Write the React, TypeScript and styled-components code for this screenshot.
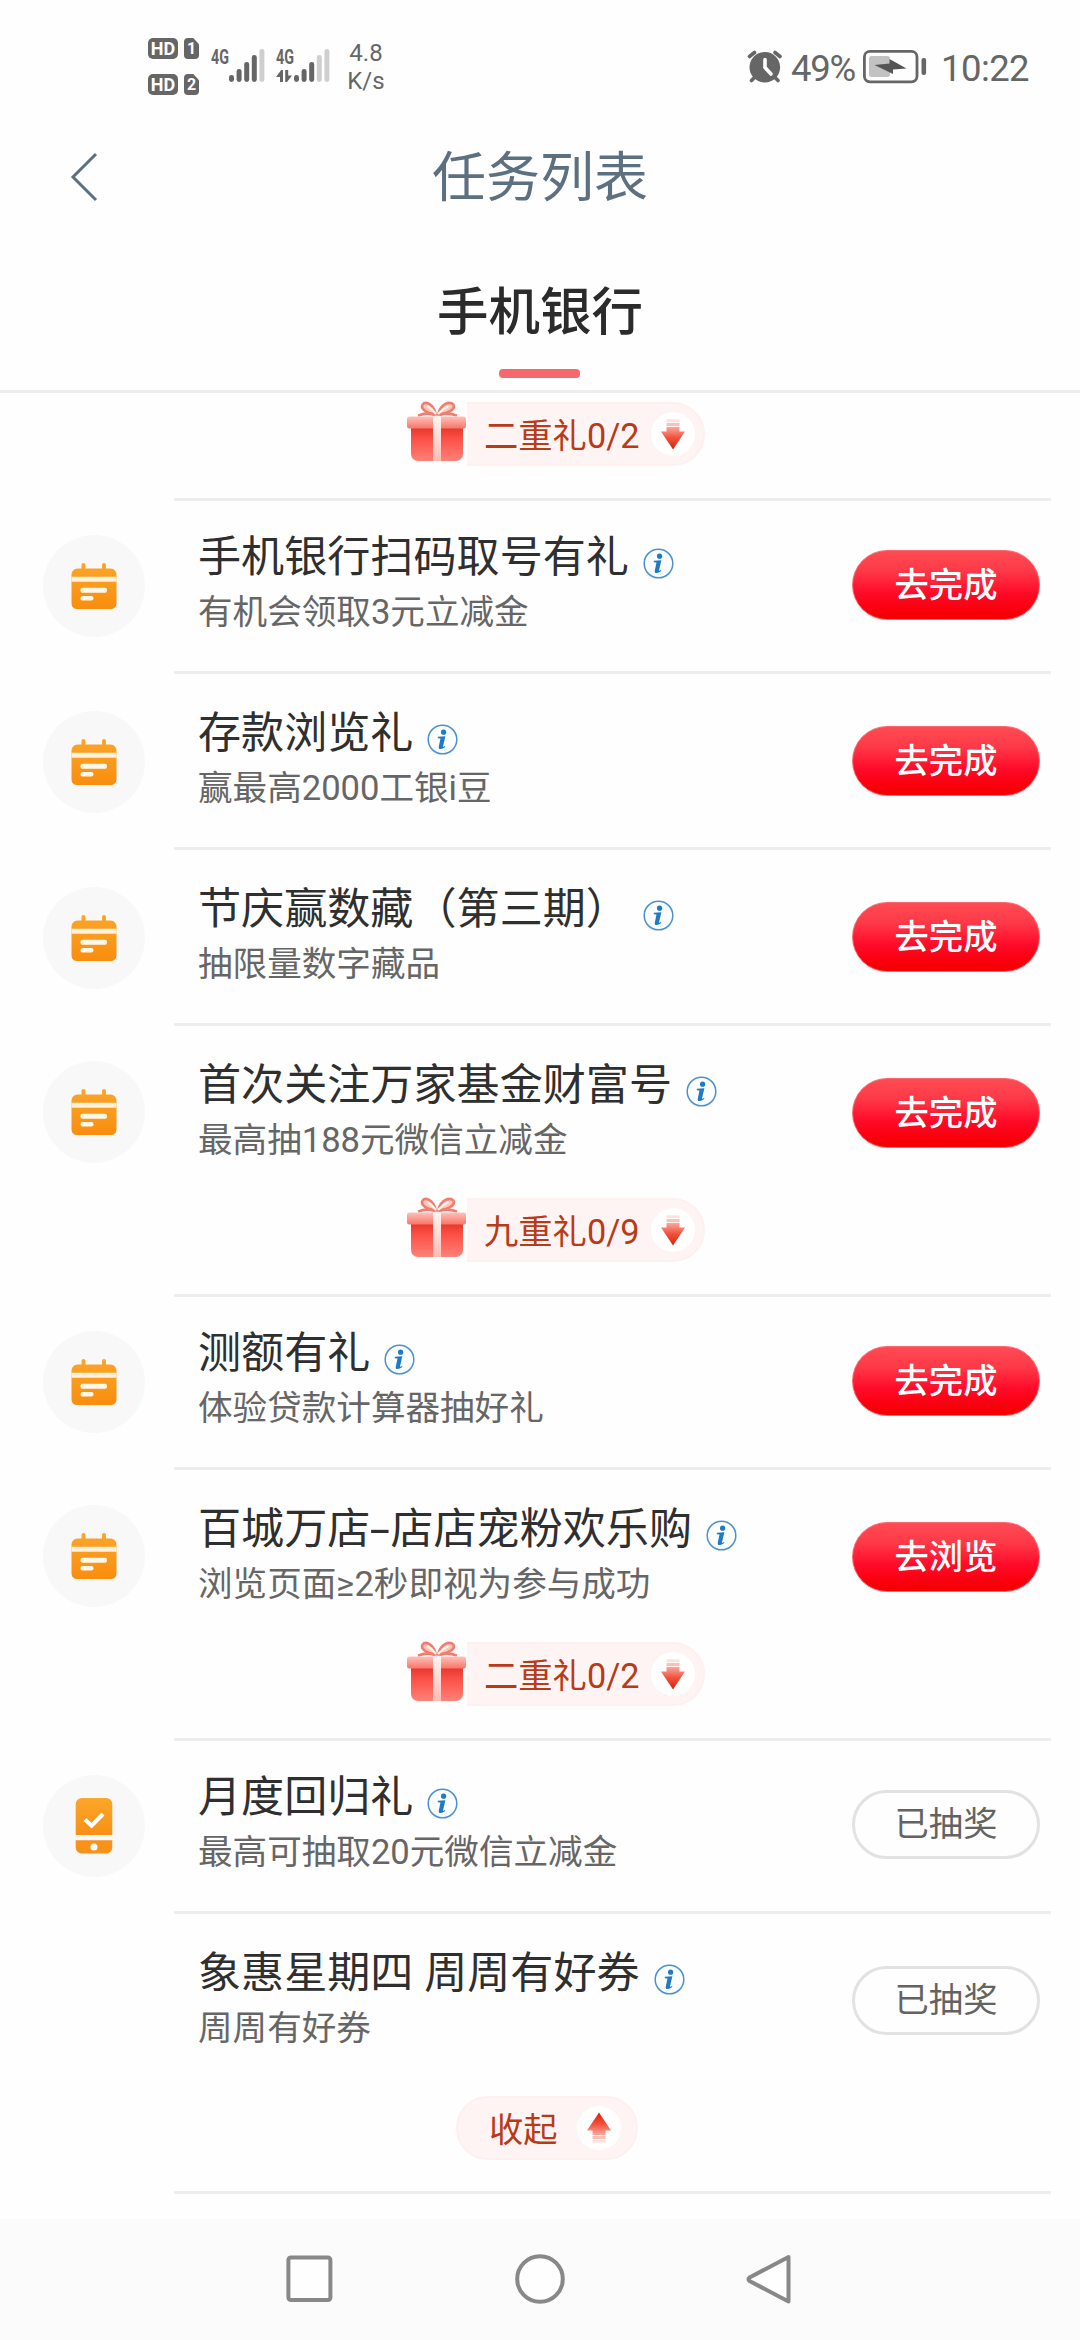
import React from "react";
import styled, { createGlobalStyle } from "styled-components";

const GlobalStyle = createGlobalStyle`
  * { box-sizing: border-box; }
  body {
    margin: 0;
    background: #fefefe;
    font-family: Roboto, "Noto Sans CJK SC", sans-serif;
  }
`;

const Screen = styled.div`
  display: flex;
  flex-direction: column;
  width: 1080px;
  height: 2340px;
  overflow: hidden;
  background: #fefefe;
`;

const StatusBar = styled.div`
  display: flex;
  justify-content: space-between;
  height: 116px;
  padding: 0 51px 0 148px;
  color: #666;
`;

const StatusLeft = styled.div`
  display: flex;
  align-items: flex-start;
  padding-top: 38px;
`;

const StatusRight = styled.div`
  display: flex;
  align-items: flex-start;
  padding-top: 48px;
`;

const SimStack = styled.div`
  display: flex;
  flex-direction: column;
  gap: 15px;
`;

const SimRow = styled.div`
  display: flex;
  gap: 6px;
`;

const HdTag = styled.span`
  width: 30px;
  height: 21px;
  border-radius: 5px;
  background: #666;
  color: #fff;
  font-size: 18px;
  font-weight: 700;
  line-height: 21px;
  text-align: center;
`;

const SimTag = styled.span`
  width: 15px;
  height: 21px;
  background: #666;
  color: #fff;
  border-radius: 4px;
  clip-path: polygon(0 0, 62% 0, 100% 30%, 100% 100%, 0 100%);
  font-size: 16px;
  font-weight: 700;
  line-height: 22px;
  text-align: center;
`;

const Signal = styled.svg<{ $left: number }>`
  display: block;
  margin: 8px 0 0 ${(p) => p.$left}px;
`;

const Speed = styled.div`
  width: 40px;
  margin: 1px 0 0 14px;
  font-size: 24px;
  line-height: 28px;
  text-align: center;
`;

const StatusText = styled.span<{ $left: number; $spacing: number }>`
  margin-left: ${(p) => p.$left}px;
  font-size: 36.5px;
  line-height: 42px;
  letter-spacing: ${(p) => p.$spacing}px;
  white-space: nowrap;
`;

const StatusIcon = styled.svg<{ $left?: number }>`
  display: block;
  margin-left: ${(p) => p.$left ?? 0}px;
`;

const Header = styled.header`
  display: grid;
  grid-template-columns: 160px 1fr 160px;
  align-items: center;
  height: 122px;
`;

const BackButton = styled.button`
  display: flex;
  align-items: center;
  height: 100%;
  padding: 0 0 0 69px;
  border: 0;
  background: none;
`;

const PageTitle = styled.h1`
  margin: 4px 0 0;
  color: #5d7080;
  font-size: 54px;
  font-weight: 400;
  line-height: 70px;
  text-align: center;
`;

const Tabs = styled.nav`
  display: flex;
  justify-content: center;
  height: 155px;
  border-bottom: 3px solid #ededed;
`;

const Tab = styled.div`
  display: flex;
  flex-direction: column;
  align-items: center;
  padding-top: 43px;
  color: #2b2b2b;
  font-size: 51.5px;
  font-weight: 500;
  line-height: 64px;

  &::after {
    content: "";
    width: 81px;
    height: 9px;
    margin-top: 24px;
    border-radius: 4px;
    background: #f6686e;
  }
`;

const List = styled.main`
  flex: 1;
  min-height: 0;
  overflow: hidden;
`;

const Row = styled.section<{ $height: number }>`
  display: flex;
  height: ${(p) => p.$height}px;
`;

const IconCell = styled.div<{ $top: number }>`
  width: 174px;
  padding: ${(p) => p.$top}px 0 0 43px;
`;

const IconDisc = styled.div`
  display: flex;
  align-items: center;
  justify-content: center;
  width: 102px;
  height: 102px;
  border-radius: 50%;
  background: #f8f8f8;
`;

const RowBody = styled.div<{ $first: boolean }>`
  display: flex;
  flex: 1;
  align-items: flex-start;
  justify-content: space-between;
  margin-right: 29px;
  padding: ${(p) => (p.$first ? 29 : 32)}px 11px 0 24px;
  border-top: 3px solid #ededed;
`;

const RowTitle = styled.h2`
  display: flex;
  align-items: center;
  margin: 0;
  color: #2f2f2f;
  font-size: 43.1px;
  font-weight: 400;
  line-height: 56px;
  white-space: pre;
`;

const Hyphen = styled.span`
  display: inline-block;
  width: 20px;
  text-align: center;
  transform: scaleX(1.7);
`;

const RowNote = styled.p`
  margin: 3px 0 0;
  color: #666;
  font-size: 34.6px;
  line-height: 46px;
  white-space: nowrap;
`;

const Info = styled.svg`
  display: block;
  margin: 10px 0 0 14px;
`;

const Action = styled.button<{ $done: boolean }>`
  width: 188px;
  height: ${(p) => (p.$done ? 69 : 70)}px;
  margin-top: 20px;
  padding: 0;
  border: ${(p) => (p.$done ? "3px solid #e2e2e2" : "1px solid #ff6a72")};
  border-radius: 35px;
  background: ${(p) =>
    p.$done
      ? "#fefefe"
      : "linear-gradient(180deg, #fd4c55 0%, #fe3947 30%, #ff0a28 62%, #fb0010 82%, #f10000 100%) border-box"};
  color: ${(p) => (p.$done ? "#636363" : "#fff")};
  font-family: inherit;
  font-size: 34.3px;
  font-weight: ${(p) => (p.$done ? 400 : 500)};
  line-height: ${(p) => (p.$done ? 63 : 66)}px;
`;

const RewardBar = styled.div<{ $height: number; $left: number }>`
  display: flex;
  align-items: flex-start;
  height: ${(p) => p.$height}px;
  padding-left: ${(p) => p.$left}px;
`;

const Gift = styled.svg`
  display: block;
  margin-top: -1px;
`;

const RewardPill = styled.div<{ $round: boolean }>`
  display: flex;
  align-items: center;
  justify-content: space-between;
  width: ${(p) => (p.$round ? 182 : 238)}px;
  height: 64px;
  padding: 0 ${(p) => (p.$round ? "15px 0 31px" : "8px 0 17px")};
  border: 2px solid #fff0f0;
  border-left-width: ${(p) => (p.$round ? 2 : 0)}px;
  border-radius: ${(p) => (p.$round ? "32px" : "0 32px 32px 0")};
  background: #fff4f4;
  color: #b93a16;
  font-size: 34.3px;
  line-height: 56px;
  white-space: nowrap;
`;

const RewardLabel = styled.span`
  padding-top: 3px;
`;

const ArrowDisc = styled.span`
  display: flex;
  align-items: center;
  justify-content: center;
  width: 44px;
  height: 44px;
  border-radius: 50%;
  background: #fff;
`;

const NavBar = styled.footer`
  display: flex;
  align-items: flex-start;
  height: 121px;
  padding: 34px 0 0 284px;
  gap: 178px;
  background: #fbfbfb;
`;

const NavIcon = styled.svg`
  display: block;
`;

function SignalIcon({ active, transfer, left }: { active: number; transfer?: boolean; left: number }) {
  const tops = [29, 23, 16, 9, 3];
  return (
    <Signal $left={left} width={56} height={38} viewBox="0 0 56 38">
      <text x="0" y="18" fontSize="20" fontWeight="700" fill="#666" textLength="18" lengthAdjust="spacingAndGlyphs">
        4G
      </text>
      {tops.map((top, i) => (
        <rect key={top} x={18 + i * 7.6} y={top} width="5" height={36 - top} rx="2.4" fill={i < active ? "#666" : "#cfcfcf"} />
      ))}
      {transfer && (
        <path d="M0 31 L5.2 24 H7 V36 H4 V31Z M9.2 24 H12.2 V29.5 H16 L11 36 H9.2Z" fill="#666" />
      )}
    </Signal>
  );
}

function AlarmIcon() {
  return (
    <StatusIcon width={38} height={40} viewBox="0 0 38 40">
      <g fill="none" stroke="#666" strokeWidth="3.6" strokeLinecap="round">
        <path d="M3.5 8.5 L8.5 4.5 M34 8.5 L29 4.5" />
        <path d="M8 30 L5.5 32.5 M29.5 30 L32 32.5" />
      </g>
      <circle cx="18.8" cy="19.2" r="15.3" fill="#666" />
      <path d="M19 11.5 V19.5 L25 26" fill="none" stroke="#fff" strokeWidth="3.6" strokeLinecap="round" />
    </StatusIcon>
  );
}

function BatteryIcon() {
  return (
    <StatusIcon $left={8} width={64} height={40} viewBox="0 0 64 40">
      <rect x="1.4" y="3.4" width="52.6" height="30.4" rx="5.5" fill="none" stroke="#666" strokeWidth="2.8" />
      <rect x="6" y="8" width="21" height="21" rx="2.5" fill="#c2c2c2" />
      <path d="M11.5 17 L26.5 15.5 V11 L43.5 20.5 L30 21.5 V26Z" fill="#555" />
      <rect x="58.5" y="10" width="4.6" height="17" rx="2" fill="#666" />
    </StatusIcon>
  );
}

function CalendarIcon() {
  return (
    <svg width="46" height="62" viewBox="0 0 46 62">
      <defs>
        <linearGradient id="calendarFill" x1="0" y1="0" x2="0" y2="1">
          <stop offset="0" stopColor="#fba62a" />
          <stop offset="1" stopColor="#f98d0e" />
        </linearGradient>
      </defs>
      <path d="M10.5 10 a2 2 0 0 1 4 0 V13.4 H31 V10 a2 2 0 0 1 4 0 V13.4 H39.5 a6 6 0 0 1 6 6 V48.5 a5.5 5.5 0 0 1 -5.5 5.5 H6 A5.5 5.5 0 0 1 .5 48.5 V19.4 a6 6 0 0 1 6 -6 H10.5Z" fill="url(#calendarFill)" />
      <path d="M.5 21.8 H45.5 V26.8 H.5Z" fill="#fff1dc" />
      <rect x="9.5" y="32.8" width="26.5" height="5" rx="2" fill="#fff7ea" />
      <rect x="9.5" y="41" width="13" height="4.6" rx="2" fill="#fff7ea" />
    </svg>
  );
}

function PhoneIcon() {
  return (
    <svg width="38" height="58" viewBox="0 0 38 58">
      <defs>
        <linearGradient id="phoneFill" x1="0" y1="0" x2="0" y2="1">
          <stop offset="0" stopColor="#fba72a" />
          <stop offset="1" stopColor="#f98f16" />
        </linearGradient>
      </defs>
      <path d="M.7 38 V7 a6 6 0 0 1 6 -6 H31.3 a6 6 0 0 1 6 6 V38Z" fill="url(#phoneFill)" />
      <path d="M.7 43.2 H37.3 V50.5 a6 6 0 0 1 -6 6 H6.7 a6 6 0 0 1 -6 -6Z" fill="#f9921b" />
      <path d="M10 22.5 L16.6 28.6 L28 17" fill="none" stroke="#fff" strokeWidth="4" />
      <circle cx="19" cy="50" r="3.5" fill="#fff" />
    </svg>
  );
}

function InfoIcon() {
  return (
    <Info width="31" height="31" viewBox="0 0 31 31">
      <circle cx="15.5" cy="15.5" r="14.3" fill="#fdfeff" stroke="#4b92cf" strokeWidth="1.5" />
      <circle cx="16.6" cy="8.2" r="2.6" fill="#2079c4" />
      <path d="M10.8 12.8 L18.4 12.2 L16 22.2 Q15.8 23.4 18.4 21.8 L18 23.2 Q11 27.4 11.8 22.4 L13.5 14.4 L10.8 14.2Z" fill="#2079c4" />
    </Info>
  );
}

function GiftIcon() {
  return (
    <Gift width="60" height="64" viewBox="0 0 60 64">
      <defs>
        <linearGradient id="giftBox" x1="0" y1="0" x2="0" y2="1">
          <stop offset="0" stopColor="#e5352b" />
          <stop offset=".35" stopColor="#fb5147" />
          <stop offset="1" stopColor="#fd8178" />
        </linearGradient>
        <linearGradient id="giftLid" x1="0" y1="0" x2="0" y2="1">
          <stop offset="0" stopColor="#fdc2ba" />
          <stop offset="1" stopColor="#fb7468" />
        </linearGradient>
        <linearGradient id="giftRibbon" x1="0" y1="0" x2="0" y2="1">
          <stop offset="0" stopColor="#fff4f1" />
          <stop offset="1" stopColor="#fdbdb4" />
        </linearGradient>
      </defs>
      <g fill="#fcc9b9" stroke="#f37c70" strokeWidth="2.6" strokeLinejoin="round">
        <path d="M29 13.5 C26 2 18 0 15.6 3.6 C13 8 20 12.5 29 13.5Z" />
        <path d="M31 13.5 C34 2 43 0 46.4 3.6 C49 8 41 12.5 31 13.5Z" />
        <path d="M28 14 Q20 11 11 14.6 M32 14 Q41 11 50 14.6" fill="none" />
      </g>
      <path d="M20.5 5 Q25 7.5 29 13 M41.5 5 Q36 7.5 31 13" fill="none" stroke="#fff3ee" strokeWidth="2.2" />
      <path d="M4 26 H56 V53 a7 7 0 0 1 -7 7 H11 a7 7 0 0 1 -7 -7Z" fill="url(#giftBox)" />
      <rect x="0" y="15.5" width="59" height="12" rx="2.5" fill="url(#giftLid)" />
      <rect x="26" y="15.5" width="8" height="44.5" fill="url(#giftRibbon)" />
    </Gift>
  );
}

function ArrowIcon({ up }: { up?: boolean }) {
  return (
    <svg width="24" height="32" viewBox="0 0 24 32">
      <defs>
        <linearGradient id="arrowFill" x1="0" y1="0" x2="0" y2="1">
          <stop offset="0" stopColor="#fba79b" />
          <stop offset=".5" stopColor="#f04f3a" />
          <stop offset="1" stopColor="#dc2008" />
        </linearGradient>
      </defs>
      <g transform={up ? "rotate(180 12 16)" : undefined}>
        <path d="M5.5 9 H18.5 V13.5 H24 L12 31.5 L0 13.5 H5.5Z" fill="url(#arrowFill)" />
        <rect x="5.5" y="5" width="13" height="3.2" fill="#fbc0b7" />
        <rect x="5.5" y="1.4" width="13" height="2.8" fill="#fde0db" />
      </g>
    </svg>
  );
}

type Task = {
  title: React.ReactNode;
  note: string;
  action: string;
  icon: "calendar" | "phone" | null;
};

type Group = { tasks: Task[]; reward: string; collapse?: boolean };

const groups: Group[] = [
  {
    reward: "九重礼0/9",
    tasks: [
      { title: "手机银行扫码取号有礼", note: "有机会领取3元立减金", action: "去完成", icon: "calendar" },
      { title: "存款浏览礼", note: "赢最高2000工银i豆", action: "去完成", icon: "calendar" },
      { title: "节庆赢数藏（第三期）", note: "抽限量数字藏品", action: "去完成", icon: "calendar" },
      { title: "首次关注万家基金财富号", note: "最高抽188元微信立减金", action: "去完成", icon: "calendar" },
    ],
  },
  {
    reward: "二重礼0/2",
    tasks: [
      { title: "测额有礼", note: "体验贷款计算器抽好礼", action: "去完成", icon: "calendar" },
      {
        title: (
          <span>
            百城万店<Hyphen>-</Hyphen>店店宠粉欢乐购
          </span>
        ),
        note: "浏览页面≥2秒即视为参与成功",
        action: "去浏览",
        icon: "calendar",
      },
    ],
  },
  {
    reward: "收起",
    collapse: true,
    tasks: [
      { title: "月度回归礼", note: "最高可抽取20元微信立减金", action: "已抽奖", icon: "phone" },
      { title: "象惠星期四 周周有好券", note: "周周有好券", action: "已抽奖", icon: null },
    ],
  },
];

function Reward({ label, collapse }: { label: string; collapse?: boolean }) {
  return (
    <RewardBar $height={collapse ? 95 : 96} $left={collapse ? 456 : 407}>
      {!collapse && <GiftIcon />}
      <RewardPill $round={!!collapse}>
        <RewardLabel>{label}</RewardLabel>
        <ArrowDisc>
          <ArrowIcon up={collapse} />
        </ArrowDisc>
      </RewardPill>
    </RewardBar>
  );
}

function TaskGroup({ tasks, reward, collapse }: Group) {
  return (
    <>
      {tasks.map((task, i) => {
        const first = i === 0;
        const last = i === tasks.length - 1;
        const height = first ? 173 : last ? (collapse ? 185 : 175) : 176;
        return (
          <Row key={i} $height={height}>
            <IconCell $top={first ? 37 : last ? 38 : 40}>
              {task.icon && <IconDisc>{task.icon === "phone" ? <PhoneIcon /> : <CalendarIcon />}</IconDisc>}
            </IconCell>
            <RowBody $first={first}>
              <div>
                <RowTitle>
                  {task.title}
                  <InfoIcon />
                </RowTitle>
                <RowNote>{task.note}</RowNote>
              </div>
              <Action $done={task.action === "已抽奖"}>{task.action}</Action>
            </RowBody>
          </Row>
        );
      })}
      <Reward label={reward} collapse={collapse} />
    </>
  );
}

const Divider = styled.div`
  height: 3px;
  margin: 0 29px 0 174px;
  background: #ededed;
`;

const ListLead = styled.div`
  height: 9px;
`;

export default function App() {
  return (
    <Screen>
      <GlobalStyle />
      <StatusBar>
        <StatusLeft>
          <SimStack>
            {["1", "2"].map((n) => (
              <SimRow key={n}>
                <HdTag>HD</HdTag>
                <SimTag>{n}</SimTag>
              </SimRow>
            ))}
          </SimStack>
          <SignalIcon left={12} active={4} />
          <SignalIcon left={9} active={3} transfer />
          <Speed>
            4.8
            <br />
            K/s
          </Speed>
        </StatusLeft>
        <StatusRight>
          <AlarmIcon />
          <StatusText $left={7} $spacing={-1.2}>49%</StatusText>
          <BatteryIcon />
          <StatusText $left={14} $spacing={-0.6}>10:22</StatusText>
        </StatusRight>
      </StatusBar>
      <Header>
        <BackButton aria-label="返回">
          <svg width="30" height="50" viewBox="0 0 30 50">
            <path d="M27 2 L4 25 L27 48" fill="none" stroke="#5d7080" strokeWidth="3" />
          </svg>
        </BackButton>
        <PageTitle>任务列表</PageTitle>
      </Header>
      <Tabs>
        <Tab>手机银行</Tab>
      </Tabs>
      <List>
        <ListLead />
        <Reward label="二重礼0/2" />
        {groups.map((group, i) => (
          <TaskGroup key={i} {...group} />
        ))}
        <Divider />
      </List>
      <NavBar>
        <NavIcon width="50" height="54" viewBox="0 0 50 54">
          <rect x="4.4" y="4.4" width="42" height="42.6" rx="2.5" fill="#fefefe" stroke="#888" strokeWidth="4" />
        </NavIcon>
        <NavIcon width="54" height="54" viewBox="0 0 54 54">
          <circle cx="28" cy="26" r="22.8" fill="#fefefe" stroke="#888" strokeWidth="4" />
        </NavIcon>
        <NavIcon width="50" height="54" viewBox="0 0 50 54">
          <path d="M44.5 4 V48.5 L5.5 28 Q3.5 26.2 5.5 24.5Z" fill="#fefefe" stroke="#888" strokeWidth="4" strokeLinejoin="round" />
        </NavIcon>
      </NavBar>
    </Screen>
  );
}
